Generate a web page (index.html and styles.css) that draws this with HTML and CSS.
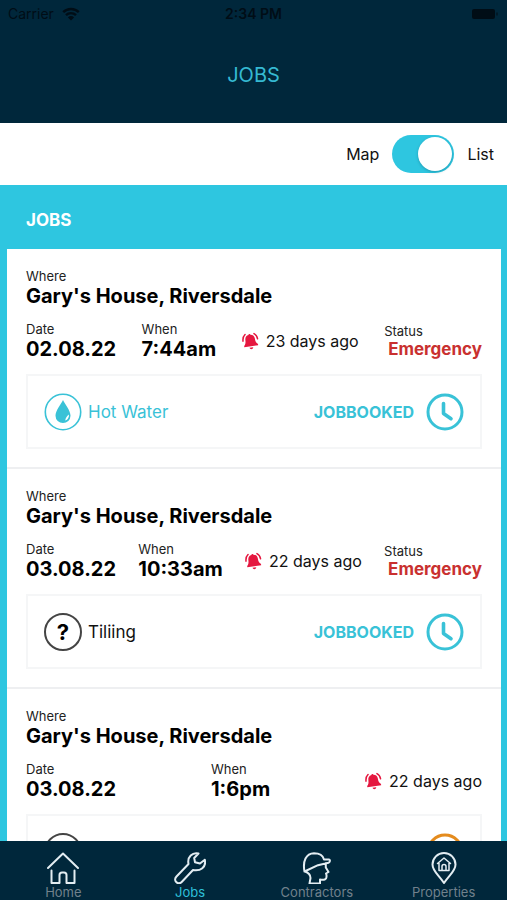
FILE: index.html
```html
<!DOCTYPE html>
<html lang="en">
<head>
<meta charset="utf-8">
<meta name="viewport" content="width=device-width, initial-scale=1">
<title>Jobs</title>
<link rel="stylesheet" href="styles.css">
</head>
<body>
<svg class="symbols" aria-hidden="true">
  <symbol id="bell" viewBox="0 0 18 20">
    <g transform="rotate(-8 9 10)">
    <path fill="currentColor" d="M7.800 3c0-1.500 2-1.500 2.200 0 2.600.4 4 2 4 4.500 0 3.200.7 4.800 2.500 6.300v1.200H1.700v-1.200c1.400-1.300 2.100-3 2.100-5.600 0-3.100 1.300-4.800 4-5.200zM7 16.500h4c-.3 2.300-3.700 2.300-4 0z"/>
    <path fill="none" stroke="currentColor" stroke-width="1.600" stroke-linecap="round" d="M1.200 8.500C1.300 5.500 2.500 3.200 4.300 1.900M13.800 2.200c1.900 1.300 2.900 3.400 3 6"/>
    </g>
  </symbol>
  <symbol id="clock" viewBox="0 0 38 38">
    <circle cx="19" cy="19" r="17" fill="none" stroke="currentColor" stroke-width="3"/>
    <path d="M17.500 10.500v10l7.500 5.200" fill="none" stroke="currentColor" stroke-width="3.600" stroke-linecap="round" stroke-linejoin="round"/>
  </symbol>
  <symbol id="drop" viewBox="0 0 38 38">
    <circle cx="19" cy="19" r="17.700" fill="none" stroke="currentColor" stroke-width="1.600"/>
    <path d="M19 7c2 4.200 7.500 10.500 7.500 15.800a7.500 7.200 0 0 1-15 0C11.500 17.500 17 11.200 19 7z" fill="currentColor"/>
    <path d="M25 21.500c.2 3-1.200 5.200-3.800 6 .4-2.500 1.500-4.500 3.800-6z" fill="#fff"/>
  </symbol>
</svg>

<header class="header">
  <div class="status-bar">
    <span class="carrier">Carrier
      <svg width="18" height="14" viewBox="0 0 18 14" aria-hidden="true"><path d="M1.200 5.200a11 11 0 0 1 15.600 0M4 8.200a7 7 0 0 1 10 0" fill="none" stroke="currentColor" stroke-width="2.400"/><path d="M9 13.600 5.900 10.400a4.400 4.400 0 0 1 6.200 0z" fill="currentColor"/></svg>
    </span>
    <span class="time">2:34 PM</span>
    <span class="battery"><svg width="28" height="12" viewBox="0 0 28 12" aria-hidden="true"><rect x="1" y="1" width="23" height="10" rx="2" fill="currentColor"/><path d="M26 4.500v3" stroke="currentColor" stroke-width="1"/></svg></span>
  </div>
  <h1 class="title">JOBS</h1>
</header>

<div class="view-toggle">
  <span>Map</span>
  <input class="switch" id="view" type="checkbox" role="switch" aria-label="Map or list" checked>
  <label for="view">List</label>
</div>

<main class="jobs">
  <h2 class="jobs-title">JOBS</h2>

  <article class="job">
    <p class="label">Where</p>
    <p class="value">Gary's House, Riversdale</p>
    <div class="details">
      <div><p class="label">Date</p><p class="value">02.08.22</p></div>
      <div><p class="label">When</p><p class="value">7:44am</p></div>
      <div class="age"><svg class="bell" aria-hidden="true"><use href="#bell"/></svg>23 days ago</div>
      <div><p class="label">Status</p><p class="urgency">Emergency</p></div>
    </div>
    <div class="trade">
      <svg class="round-icon accent" aria-hidden="true"><use href="#drop"/></svg>
      <span class="trade-name accent">Hot Water</span>
      <span class="stage accent">JOBBOOKED</span>
      <svg class="round-icon accent" aria-hidden="true"><use href="#clock"/></svg>
    </div>
  </article>

  <article class="job">
    <p class="label">Where</p>
    <p class="value">Gary's House, Riversdale</p>
    <div class="details">
      <div><p class="label">Date</p><p class="value">03.08.22</p></div>
      <div><p class="label">When</p><p class="value">10:33am</p></div>
      <div class="age"><svg class="bell" aria-hidden="true"><use href="#bell"/></svg>22 days ago</div>
      <div><p class="label">Status</p><p class="urgency">Emergency</p></div>
    </div>
    <div class="trade">
      <span class="unknown">?</span>
      <span class="trade-name">Tiliing</span>
      <span class="stage accent">JOBBOOKED</span>
      <svg class="round-icon accent" aria-hidden="true"><use href="#clock"/></svg>
    </div>
  </article>

  <article class="job">
    <p class="label">Where</p>
    <p class="value">Gary's House, Riversdale</p>
    <div class="details">
      <div><p class="label">Date</p><p class="value">03.08.22</p></div>
      <div><p class="label">When</p><p class="value">1:6pm</p></div>
      <div class="age"><svg class="bell" aria-hidden="true"><use href="#bell"/></svg>22 days ago</div>
    </div>
    <div class="trade">
      <span class="unknown"></span>
      <span class="trade-name"></span>
      <svg class="round-icon pending" aria-hidden="true"><use href="#clock"/></svg>
    </div>
  </article>
</main>

<nav class="tabs">
  <a class="tab" href="#home">
    <svg viewBox="0 0 32 32" aria-hidden="true"><path d="M1 16 16 1.500 31 16M4.500 18.500V31h8v-8a2.500 2.500 0 0 1 2.500-2.500h2a2.500 2.500 0 0 1 2.500 2.500v8h8V18.500"/></svg>
    Home
  </a>
  <a class="tab active" href="#jobs" aria-current="page">
    <svg viewBox="0 0 32 32" aria-hidden="true"><path d="M24.500 1.500C18.500 0 13 5 14.500 12L2.500 24.500c-4 4 1.500 9 5.200 5.500L19 18c7.500 1.500 13.500-3 11.800-10.200L26 11.500l-5-1.300-.8-4.200z"/></svg>
    Jobs
  </a>
  <a class="tab" href="#contractors">
    <svg viewBox="0 0 32 32" aria-hidden="true"><path d="M3.500 19.500C1.500 9 5 1.500 13 1.200c5.500 0 9 2.500 10 6.200l5 .1c1.500.3 1 2.800-.5 3.300L17 13.200zM4 19.500c3 1 5.500 3.500 5.500 6.500l-1 5.500h10.500v-4c4 .7 6.500 0 6.500-2.500v-2l-.5-1.500 2.500-1.500-2.700-4.500v-4.300"/></svg>
    Contractors
  </a>
  <a class="tab" href="#properties">
    <svg viewBox="0 0 32 32" aria-hidden="true"><path d="M16 31C10 22 4.500 19 4.500 12.500a11.500 11.500 0 0 1 23 0C27.500 19 22 22 16 31z"/><path class="fine" d="M9.500 11.500 16 6l6.500 5.500M11 11v7.500h10V11M14 18.500v-4a2 2 0 0 1 4 0v4"/></svg>
    Properties
  </a>
</nav>
</body>
</html>
```
FILE: styles.css
```css
* {
  box-sizing: border-box;
}

body {
  margin: 0;
  height: 100vh;
  display: flex;
  flex-direction: column;
  overflow: hidden;
  background: #fff;
  color: #111;
  font: 17px/24px Inter, sans-serif;
}

h1,
h2,
p {
  margin: 0;
}

.symbols {
  display: none;
}

.header {
  flex: none;
  padding-bottom: 35px;
  background: #00273b;
}

.status-bar {
  display: grid;
  grid-template-columns: 1fr auto 1fr;
  align-items: center;
  height: 28px;
  padding: 0 8px;
  color: #000d16;
  font-size: 14px;
}

.carrier {
  display: flex;
  align-items: center;
  gap: 8px;
}

.time {
  font-weight: 600;
}

.battery {
  display: flex;
  justify-content: flex-end;
}

.title {
  padding-top: 34px;
  color: #35b9d2;
  font-size: 20px;
  font-weight: 400;
  line-height: 26px;
  text-align: center;
}

.view-toggle {
  flex: none;
  display: flex;
  align-items: center;
  justify-content: flex-end;
  gap: 13px;
  height: 62px;
  padding-right: 13px;
  font-size: 16px;
}

.switch {
  appearance: none;
  display: flex;
  justify-content: flex-end;
  width: 62px;
  height: 38px;
  margin: 0;
  padding: 2px;
  border-radius: 19px;
  background: #2ec6e0;
}

.switch::before {
  content: "";
  width: 34px;
  height: 34px;
  border-radius: 50%;
  background: #fff;
  box-shadow: 0 1px 3px rgba(0, 60, 80, 0.3);
}

.switch:not(:checked) {
  justify-content: flex-start;
}

.jobs {
  flex: 1;
  min-height: 0;
  overflow: hidden;
  padding: 0 6px 0 7px;
  background: #2ec6e0;
}

.jobs-title {
  padding: 23px 19px 17px;
  color: #fff;
  font-size: 17px;
  font-weight: 700;
}

.job {
  padding: 19px 19px 18px;
  border-bottom: 2px solid #eeeff1;
  background: #fff;
}

.label {
  color: #222;
  font-size: 13px;
  line-height: 16px;
}

.value {
  color: #000;
  font-size: 20px;
  font-weight: 700;
}

.details {
  display: flex;
  align-items: center;
  justify-content: space-between;
  margin: 13px 0;
}

.age {
  display: flex;
  align-items: center;
  gap: 7px;
  font-size: 16px;
}

.bell {
  width: 17px;
  height: 19px;
  color: #e5173f;
}

.urgency {
  padding-left: 4px;
  color: #c9302f;
  font-size: 17px;
  font-weight: 700;
  line-height: 20px;
}

.trade {
  display: flex;
  align-items: center;
  height: 75px;
  padding: 0 16px;
  border: 2px solid #f5f6f7;
}

.round-icon {
  width: 38px;
  height: 38px;
}

.accent {
  color: #39c2d7;
}

.pending {
  color: #e48b1d;
}

.unknown {
  display: grid;
  place-items: center;
  width: 38px;
  height: 38px;
  border: 2px solid #444;
  border-radius: 50%;
  color: #000;
  font-size: 22px;
  font-weight: 700;
}

.trade-name {
  flex: 1;
  padding-left: 6px;
}

.stage {
  padding-right: 12px;
  font-size: 16px;
  font-weight: 700;
}

.tabs {
  flex: none;
  display: grid;
  grid-template-columns: repeat(4, 1fr);
  height: 59px;
  padding-top: 11px;
  background: #00273b;
}

.tab {
  display: flex;
  flex-direction: column;
  align-items: center;
  color: #71818c;
  font-size: 13px;
  line-height: 16px;
  text-decoration: none;
}

.tab svg {
  width: 32px;
  height: 32px;
  fill: none;
  stroke: #e3edf2;
  stroke-width: 2;
  stroke-linejoin: round;
  stroke-linecap: round;
}

.tab .fine {
  stroke-width: 1.5;
}

.active {
  color: #2ec0da;
}
```
